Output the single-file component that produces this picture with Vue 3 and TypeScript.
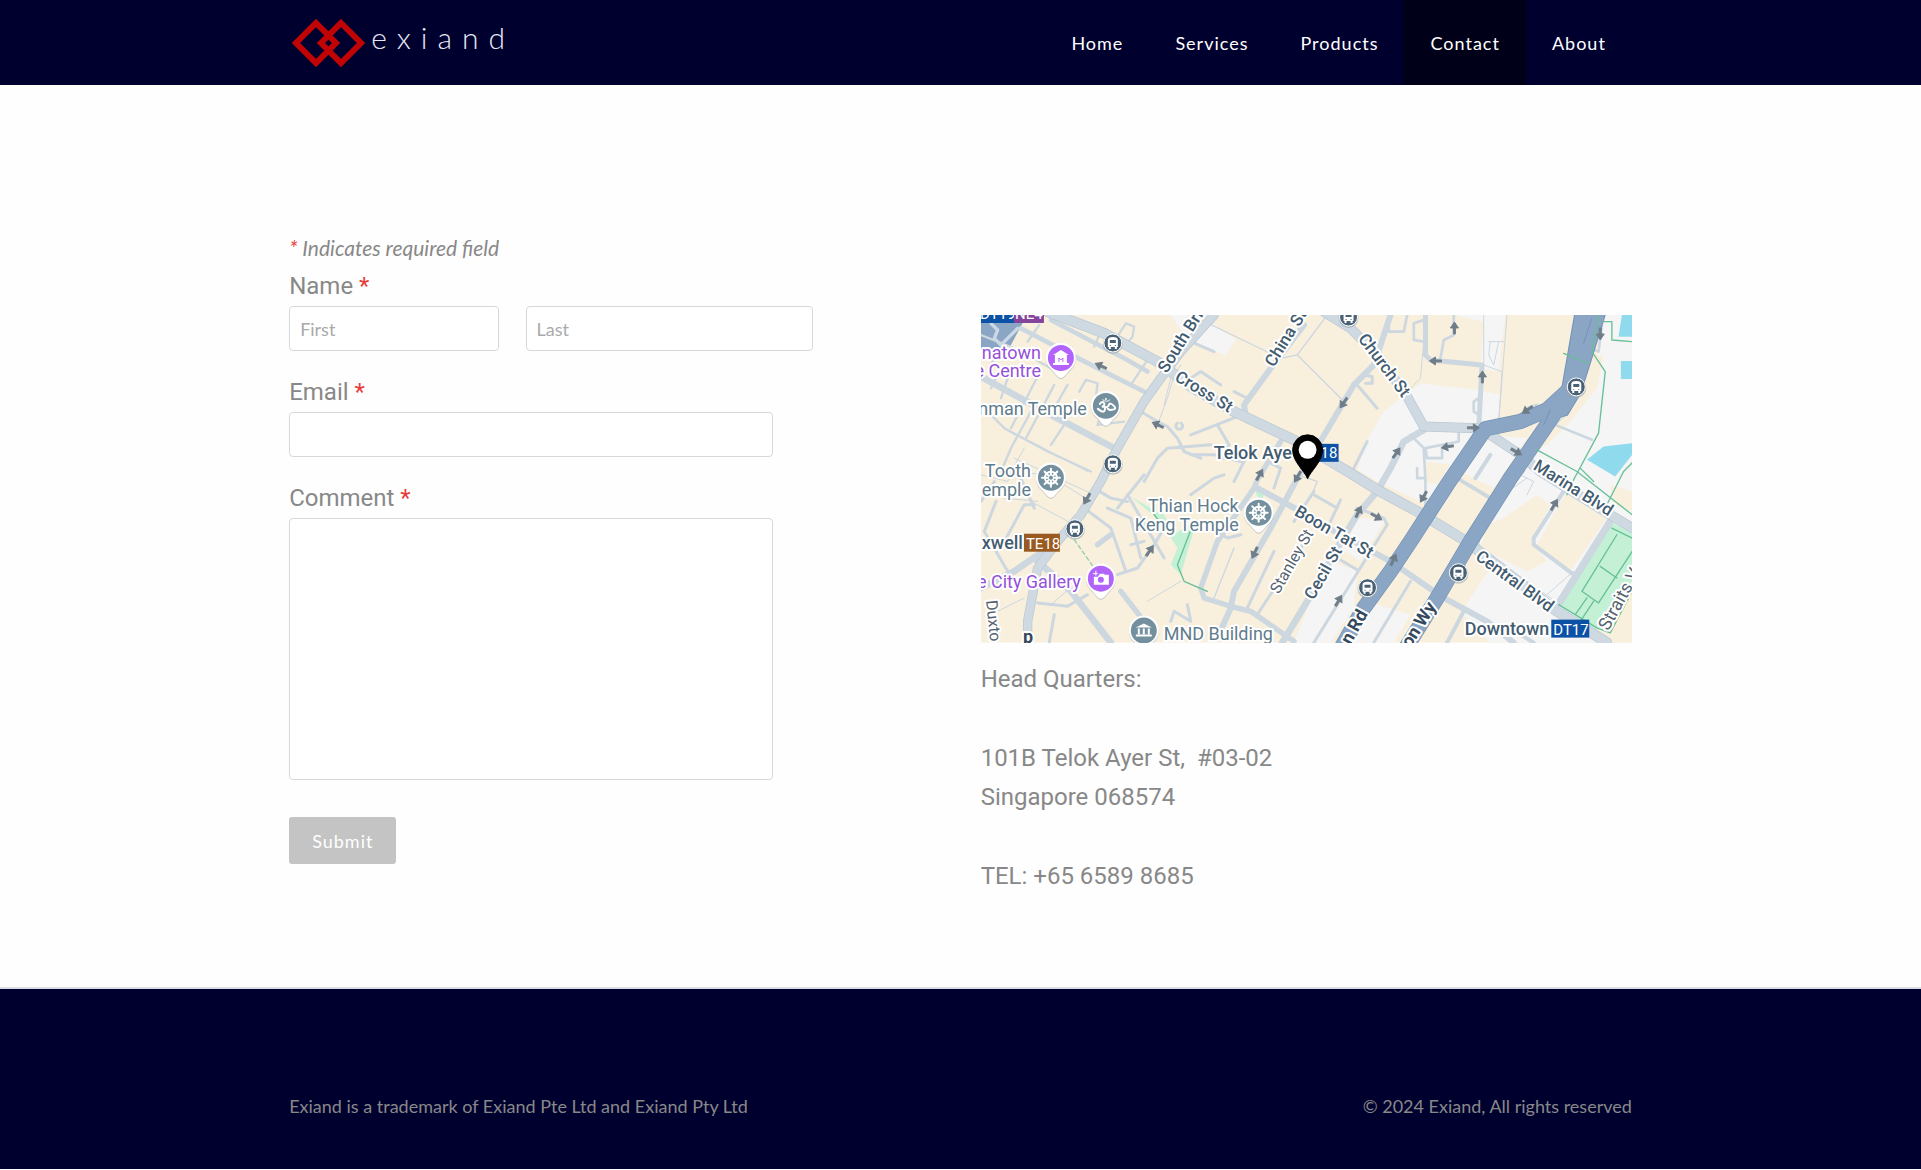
<script setup lang="ts">
import { ref } from 'vue'

interface NavItem { label: string; active?: boolean }
interface Road { d: string; w: number }
interface Label { t: string; x: number; y: number; r?: number; k?: string; end?: boolean }

const nav: NavItem[] = [
  { label: 'Home' },
  { label: 'Services' },
  { label: 'Products' },
  { label: 'Contact', active: true },
  { label: 'About' },
]

const first = ref('')
const last = ref('')
const email = ref('')
const comment = ref('')

// Ground shapes and roads use a grid three times finer than the labels.
const pale: string[] = [
  'M640 30L690 20L765 75L735 122L650 90Z',
  'M570 0H630L660 50L610 60Z',
  'M1210 290L1320 205L1400 215L1500 225L1560 240L1550 330L1490 345L1390 520L1340 570L1190 500L1130 465L1160 375Z',
  'M1420 0H1575L1555 170L1500 160L1510 20Z',
  'M1860 0H1956V984H1530L1450 900L1380 860L1480 690L1600 480L1700 340L1850 150Z',
  'M1510 360L1640 370L1540 520L1440 470Z',
  'M1030 730L1130 770L1120 880L1050 984H940L1000 830Z',
  'M1130 610L1215 615L1140 740L1080 700Z',
  'M1160 860L1290 900L1240 984H1100Z',
]
const sand: string[] = [
  'M1835 130L1870 120L1850 220L1770 320L1700 390L1620 430L1650 350L1740 300Z',
  'M1760 530L1880 610L1770 770L1670 690Z',
  'M1570 610L1670 540L1710 570L1650 680L1700 740L1640 770L1500 700L1520 630Z',
  'M1500 700L1470 680L1350 850L1430 910L1530 760Z',
  'M1890 510L1956 530V590L1900 570Z',
  'M1340 440L1410 450L1370 510L1330 500Z',
  'M1850 950L1956 830V984H1870Z',
]
const roads: Road[] = [
  { w: 14, d: 'M120 40L370 170L500 235M210 15L430 130L500 170' },
  { w: 20, d: 'M0 185L220 305L400 400M0 820L100 770L230 680M160 730L270 830L390 984' },
  { w: 7, d: 'M175 30L140 80M355 60L340 95M400 80L435 25L460 35L455 65L430 95M295 230L315 195L350 205L345 250M500 135L450 210M170 185L90 340M220 210L135 370M0 270L70 340L200 410L330 470M260 210L220 280M250 330L210 390M0 60L100 100L220 165M0 110L60 160L30 220M90 160L60 250M380 250L350 330L430 320M150 290L90 400L60 470' },
  { w: 3, d: 'M130 400L90 470L200 480L330 560M100 430L340 540M600 150L580 180L560 250L530 330M570 190L550 270M0 480L80 500L100 460M150 380L320 470' },
  { w: 9, d: 'M480 290L530 320L560 335L590 370L610 410L660 430M690 390L560 400L530 430L490 500M590 325A10 10 0 1 0 601 325M45 560L10 650L80 770M160 570L130 570L70 680M110 470L160 580M310 580L390 640L435 770M380 580L450 610L480 730M440 540L550 730M410 780L470 760L520 690L550 640M490 480L410 580M170 865L260 875L320 840M220 900L205 984M570 920L580 890L630 920L620 870M0 560L40 500M340 520L390 550L440 560M450 690L490 680' },
  { w: 3, d: 'M150 560L280 630M70 550L170 560M30 900L130 850M280 810L210 870M500 860L600 800' },
  { w: 16, d: 'M350 690L390 660M420 830L490 920' },
  { w: 18, d: 'M970 30L870 160L790 270L795 300M1230 0L1180 150L1120 210L1025 370L945 500L870 640L760 830L750 880L710 970' },
  { w: 16, d: 'M900 380L830 495L820 520L710 680L660 820L670 850L750 875L810 890L940 980' },
  { w: 18, d: 'M830 520L960 590L1080 660L1230 740L1390 850L1520 920L1600 984' },
  { w: 20, d: 'M1330 345L1270 380L1230 460L1190 530L1130 600L1070 700L980 860L905 984' },
  { w: 9, d: 'M1130 210L1190 280M1150 180L1175 185L1175 205L1155 205M760 230L800 250M630 360L770 305M710 330L745 390L730 430M630 420L700 420L780 440M630 80L700 110M630 190L660 170L720 210M1000 530L940 620M1000 540L1070 580M1080 555L1050 620M880 710L800 880M980 670L830 900M1220 630L1000 984M1130 580L1210 610L1220 630M1070 730L1130 765M1290 800L1180 984M630 540L700 490L730 480M690 640L740 670L780 660M810 400L760 500M860 440L900 460L880 520M1160 380L1120 460' },
  { w: 4, d: 'M1040 0L950 120L1090 260M950 120L900 130L630 0M760 700L700 850M950 480L1010 500L990 550M840 570L820 600' },
  { w: 15, d: 'M1335 0L1335 120L1350 135L1505 150L1495 340' },
  { w: 8, d: 'M1420 0V60L1390 75L1380 130M1300 25V75L1330 80M1300 25L1330 15M1225 10L1225 50L1270 50L1280 0M1435 350V380L1335 400L1340 430H1385V400M1290 360L1330 400L1335 500V590M1310 460V490L1335 490M1495 250L1480 260V290L1495 300M1725 330L1835 375M1865 30L1855 110L1830 100M1620 300L1640 280L1670 270M1590 490L1630 470' },
  { w: 3, d: 'M1510 0V150L1565 170L1555 320M1580 0L1555 320M1525 80H1570M1530 80L1525 120L1540 150L1555 80M1330 80L1320 190L1280 230M1770 290L1725 330M1510 340L1560 320M1620 480L1660 500L1640 540M1500 700L1490 640L1540 560L1640 490M1510 710L1740 870M1700 840L1780 770' },
  { w: 12, d: 'M1530 420L1485 490M1750 530L1660 670V690L1780 780M1430 490L1530 550M1590 940L1660 984M1450 890L1400 984' },
  { w: 22, d: 'M1890 620L1740 860' },
]
const majors: Road[] = [
  { w: 28, d: 'M200 -10L370 55L530 140L630 215L760 290L950 380L1110 475L1190 525L1310 590L1450 675L1510 720L1730 890L1880 984' },
  { w: 24, d: 'M700 0L600 110L540 190L490 260L410 400L360 500L300 600L230 680L170 760L140 920V984' },
  { w: 26, d: 'M1030 -10L1110 40L1190 120L1280 245L1330 335L1490 340M1530 360L1620 420L1680 470L1890 600L1956 640' },
]
const highways: Road[] = [
  { w: 46, d: 'M1770 220L1700 285L1620 320L1515 342L1400 510L1290 680L1230 770L1150 880L1085 994' },
  { w: 46, d: 'M1780 210L1690 345L1590 490L1470 680L1370 850L1280 994' },
]
const trunk = 'M1785 -5H1875L1827 150L1800 235L1760 300L1690 320L1715 270L1745 225Z'
const green: string[] = [
  'M1750 115L1825 145M1855 0L1835 110L1875 170L1855 355L1780 495L1760 540M1670 405L1790 470L1956 600M1870 20H1895V75L1956 80M1960 440L1930 470L1880 570M1800 460L1840 500',
  'M1895 640L1956 670M1910 660L1805 830L1855 865L1956 710M1860 755L1910 790M1735 870L1850 940L1890 955L1956 830M1820 850L1785 900M1840 860L1800 920',
  'M640 620L590 750L610 800L680 830M520 600L560 650',
]
// Position and heading of the one-way arrows, in label units.
const arrows = [
  [120, 51, 205], [177, 110, 205], [363, 88, 125], [416, 138, -55], [474, 13, -90], [455, 46, 180],
  [502, 62, -90], [493, 113, 0], [467, 132, 170], [547, 95, 145], [536, 137, 30], [620, 19, 90],
  [106, 184, 120], [169, 236, -55], [274, 238, 115], [378, 197, -65], [396, 202, 30], [413, 245, -65],
  [358, 286, -60], [443, 182, 120], [574, 190, -60], [279, 160, -60], [317, 162, 120],
]
const stops = [[132, 28], [132, 149], [368, 2], [596, 72], [94, 214], [387, 273], [478, 258]]
const pins = [
  { x: 80, y: 43, kind: 'museum' },
  { x: 125, y: 91, kind: 'om' },
  { x: 70, y: 163, kind: 'wheel' },
  { x: 278, y: 198, kind: 'wheel' },
  { x: 120, y: 264, kind: 'camera' },
  { x: 163, y: 316, kind: 'bank' },
]
const labels: Label[] = [
  { t: 'natown', x: 60, y: 44, k: 'violet', end: true },
  { t: 'e Centre', x: 60, y: 62, k: 'violet', end: true },
  { t: 'nman Temple', x: 106, y: 100, end: true },
  { t: 'Tooth', x: 50, y: 162, end: true },
  { t: 'emple', x: 50, y: 181, end: true },
  { t: 'xwell', x: 42, y: 234, k: 'strong', end: true },
  { t: 'e City Gallery', x: 100, y: 273, k: 'violet', end: true },
  { t: 'Thian Hock', x: 258, y: 197, end: true },
  { t: 'Keng Temple', x: 258, y: 216, end: true },
  { t: 'MND Building', x: 183, y: 325 },
  { t: 'Telok Aye', x: 233, y: 144, k: 'strong' },
  { t: 'Downtown', x: 569, y: 320, k: 'strong', end: true },
  { t: 'South Bri', x: 186, y: 59, r: -58, k: 'street' },
  { t: 'Cross St', x: 193, y: 65, r: 31, k: 'street' },
  { t: 'China St', x: 293, y: 53, r: -58, k: 'street' },
  { t: 'Church St', x: 377, y: 24, r: 53, k: 'street' },
  { t: 'Boon Tat St', x: 313, y: 200, r: 30, k: 'street' },
  { t: 'Stanley St', x: 298, y: 280, r: -60, k: 'lane' },
  { t: 'Cecil St', x: 333, y: 286, r: -60, k: 'street' },
  { t: 'Marina Blvd', x: 552, y: 154, r: 32, k: 'street' },
  { t: 'Central Blvd', x: 494, y: 244, r: 36, k: 'street' },
  { t: 'Straits V', x: 628, y: 317, r: -61, k: 'quay' },
  { t: 'n Rd', x: 370, y: 331, r: -61, k: 'bold' },
  { t: 'on Wy', x: 430, y: 334, r: -58, k: 'bold' },
  { t: 'Duxto', x: 5, y: 286, r: 84, k: 'lane' },
  { t: 'p', x: 42, y: 328, k: 'bold' },
]
const spokes = [0, 45, 90, 135]
</script>

<template>
  <div class="page">
    <header class="top">
      <div class="wrap bar">
        <a class="logo" href="#" aria-label="exiand">
          <svg width="76" height="52" viewBox="0 0 76 52" fill="none" stroke="#c00404" stroke-width="6" aria-hidden="true">
            <path d="M27 6L47 26L27 46L7 26Z" />
            <path d="M52 6L72 26L52 46L32 26Z" />
          </svg>
          <span class="word">exiand</span>
        </a>
        <nav class="menu">
          <a v-for="item in nav" :key="item.label" href="#" :class="{ active: item.active }">{{ item.label }}</a>
        </nav>
      </div>
    </header>

    <main class="wrap content">
      <form class="form" @submit.prevent>
        <p class="hint"><span class="req">*</span> Indicates required field</p>
        <div class="field">
          <label for="first">Name <span class="req">*</span></label>
          <div class="names">
            <input id="first" v-model="first" class="first" type="text" placeholder="First">
            <input id="last" v-model="last" class="last" type="text" placeholder="Last" aria-label="Last name">
          </div>
        </div>
        <div class="field">
          <label for="email">Email <span class="req">*</span></label>
          <input id="email" v-model="email" class="wide" type="email">
        </div>
        <div class="field">
          <label for="comment">Comment <span class="req">*</span></label>
          <textarea id="comment" v-model="comment" class="wide"></textarea>
        </div>
        <button type="submit">Submit</button>
      </form>

      <section class="office">
        <svg class="map" viewBox="0 0 652 328" role="img" aria-label="Map of Telok Ayer">
          <rect width="652" height="328" fill="#f8efdd" />
          <g transform="scale(.33333)" fill="none" stroke-linejoin="round" stroke-linecap="round">
            <path v-for="d in pale" :key="d" :d="d" fill="#f5f5f5" />
            <path v-for="d in sand" :key="d" :d="d" fill="#f8efdd" />
            <path d="M1890 620L1956 655V800L1850 950L1740 870Z" fill="#c4f1d6" />
            <path d="M450 545L510 580L550 600L580 660L650 610L600 780L570 750L590 700L540 620Z" fill="#c4f1d6" />
            <path d="M820 520L850 540L840 570Z" fill="#c4f1d6" />
            <path d="M1925 0H1956V65H1915ZM1922 138H1956V192H1922ZM1820 435L1870 395L1956 385V420L1905 485Z" fill="#90daed" />
            <path d="M0 15H130L90 90L30 130L0 110Z" fill="#8ba5c4" />
            <path d="M30 25L50 45L40 70L60 90L110 40" stroke="#cbd9e6" stroke-width="10" />
            <path v-for="r in roads" :key="r.d" :d="r.d" :stroke-width="r.w" stroke="#ccd7df" />
            <path v-for="r in majors" :key="r.d" :d="r.d" :stroke-width="r.w + 4" stroke="#b9c7d3" />
            <path v-for="r in majors" :key="'m' + r.d" :d="r.d" :stroke-width="r.w" stroke="#cfd9e1" />
            <path :d="trunk" stroke="#7592b5" stroke-width="6" />
            <path v-for="r in highways" :key="r.d" :d="r.d" :stroke-width="r.w" stroke="#7592b5" />
            <path v-for="r in highways" :key="'h' + r.d" :d="r.d" :stroke-width="r.w - 4" stroke="#8ba5c4" />
            <path :d="trunk" fill="#8ba5c4" />
            <path d="M1835 10L1810 85M1710 285L1690 330" stroke="#7592b5" stroke-width="3" />
            <path v-for="d in green" :key="d" :d="d" stroke="#67c097" stroke-width="4" />
            <path d="M280 675L340 760" stroke="#8fcfae" stroke-width="4" stroke-dasharray="12 9" />
          </g>
          <path v-for="(a, i) in arrows" :key="i" d="M-6 -1H0V-4L6 0L0 4V1H-6Z" fill="#6f7d89" stroke="#6f7d89"
            stroke-width="1" :transform="`translate(${a[0]} ${a[1]}) rotate(${a[2]})`" />

          <g class="labels">
            <text v-for="l in labels" :key="l.t" :class="l.k" :text-anchor="l.end ? 'end' : 'start'"
              :transform="`translate(${l.x} ${l.y}) rotate(${l.r ?? 0})`">{{ l.t }}</text>
          </g>

          <g class="tags">
            <rect x="-6" y="-10" width="39" height="18" fill="#0b52a6" /><text x="-1" y="4">DT19</text>
            <rect x="33" y="-10" width="30" height="18" fill="#85449b" /><text x="34" y="4">NE4</text>
            <rect x="43" y="219" width="36" height="18" fill="#9a5b20" /><text x="45" y="234">TE18</text>
            <rect x="320" y="129" width="38" height="18" fill="#0b52a6" /><text x="340" y="143">18</text>
            <rect x="571" y="305" width="38" height="18" fill="#0b52a6" /><text x="573" y="320">DT17</text>
          </g>

          <g v-for="(s, i) in stops" :key="'s' + i" :transform="`translate(${s[0]} ${s[1]})`">
            <circle r="10" cy="1" fill="#9aa5ae" opacity=".6" />
            <circle r="9" fill="#4a6175" stroke="#fff" stroke-width="1" />
            <path d="M-5 4V-3Q-5 -6 0 -6T5 -3V4H4V6H2V4H-2V6H-4V4Z" fill="#fff" />
            <path d="M-3 -3H3V0H-3ZM-3 2H-2V3H-3ZM2 2H3V3H2Z" fill="#4a6175" />
          </g>

          <g v-for="(p, i) in pins" :key="'p' + i" :transform="`translate(${p.x} ${p.y})`" fill="none" stroke="#fff">
            <path d="M0 21C-3 21 -6 16 -10 12A15 15 0 1 1 10 12C6 16 3 21 0 21Z" fill="#a9a9a9" stroke="none" opacity=".6" />
            <path d="M0 20C-3 20 -6 15 -10 11A15 15 0 1 1 10 11C6 15 3 20 0 20Z" fill="#fff" stroke="none" />
            <circle r="13" stroke="none" :fill="p.kind === 'museum' || p.kind === 'camera' ? '#b163fb' : '#74909f'" />
            <g v-if="p.kind === 'museum'">
              <path d="M-8 -3L0 -8L8 -3ZM-6 -3H6V5H-6ZM-8 5H8V7H-8Z" fill="#fff" stroke="none" />
              <path d="M-2 4V0L0 2L2 0V4" stroke="#b163fb" stroke-width="1" />
            </g>
            <g v-else-if="p.kind === 'camera'">
              <path d="M-7 -2H-3L-1 -5H3L4 -4H8V6H-7Z" fill="#fff" stroke="none" />
              <circle cy="1" r="3" fill="#b163fb" stroke="none" />
              <path d="M-5 -8V-3M-8 -5H-3" stroke-width="1" />
            </g>
            <g v-else-if="p.kind === 'bank'">
              <path d="M-8 -3L0 -7L8 -3ZM-8 4H8V6H-8Z" fill="#fff" stroke="none" />
              <path d="M-5 -2V4M0 -2V4M5 -2V4" stroke-width="2" />
            </g>
            <g v-else-if="p.kind === 'wheel'">
              <circle r="6" stroke-width="2" />
              <path v-for="a in spokes" :key="a" d="M-9 0H9" stroke-width="2" stroke-linecap="round" :transform="`rotate(${a})`" />
              <circle r="2" fill="#74909f" stroke="none" />
            </g>
            <g v-else stroke-width="2" stroke-linecap="round">
              <path d="M-6 -2Q-4 -5 -2 -3T-4 1Q0 0 -1 4T-8 3M-1 1Q2 2 3 -1T8 0T4 4L2 3" />
              <path d="M-3 -6Q1 -3 4 -6" stroke-width="1" />
              <circle cy="-7" r="1" fill="#fff" stroke="none" />
            </g>
          </g>

          <path d="M327 164C324 156 312 147 312 135A15 15 0 0 1 342 135C342 147 330 156 327 164Z" fill="#000" stroke="#000" stroke-width="1" />
          <circle cx="327" cy="135" r="9" fill="#fff" />
        </svg>
        <address>
          <p>Head Quarters:</p>
          <p>101B Telok Ayer St,&nbsp; #03-02<br>Singapore 068574</p>
          <p>TEL: +65 6589 8685</p>
        </address>
      </section>
    </main>

    <footer class="bottom">
      <div class="wrap notes">
        <span>Exiand is a trademark of Exiand Pte Ltd and Exiand Pty Ltd</span>
        <span>© 2024 Exiand, All rights reserved</span>
      </div>
    </footer>
  </div>
</template>

<style>
body { background: #fefefe; }
</style>

<style scoped>
* { box-sizing: border-box; }
p { margin: 0; }
.page { font-family: Lato, sans-serif; font-size: 18px; color: #888; }
.wrap { width: calc(70% - 2px); margin: 0 auto; }

.top { background: #00002f; }
.bar { display: flex; justify-content: space-between; height: 85px; }
.logo { display: flex; align-items: center; color: #e8e8f4; text-decoration: none; }
.word { font-size: 30px; font-weight: 300; line-height: 36px; letter-spacing: 10px; margin-bottom: 12px; padding-left: 6px; }
.menu { display: flex; }
.menu a { padding: 0 26px; color: #fff; text-decoration: none; letter-spacing: 1px; line-height: 86px; }
.menu a.active { background: #000018; }

.content { display: flex; justify-content: space-between; align-items: flex-start; padding: 143px 0 91px; }
.form { width: 39%; }
.hint { font-size: 21px; font-style: italic; line-height: 39px; }
.req { color: #e93a3a; }
.field { display: flex; flex-direction: column; margin-bottom: 22px; }
label { font: 24px/39px Roboto, sans-serif; }
.names { display: flex; gap: 27px; }
input, textarea {
  display: block; min-width: 0; height: 45px; padding: 0 10px; border: 1px solid #d6d9db; border-radius: 4px;
  background: #fff; color: #666; font: 18px Lato, sans-serif;
}
input::placeholder { color: #aaa; opacity: 1; }
.names .first { width: 40%; }
.names .last { flex: 1; }
.wide { width: calc(100% - 40px); }
textarea { height: 262px; padding: 10px; resize: none; }
button {
  height: 47px; margin-top: 15px; padding: 0 23px; border: 0; border-radius: 3px; background: #c4c4c4; color: #fff;
  font: 18px Lato, sans-serif; letter-spacing: 1px;
}

.office { width: 48.5%; padding-top: 87px; }
.map { display: block; width: 100%; }
address { display: flex; flex-direction: column; gap: 40px; margin-top: 17px; font: 24px/39px Roboto, sans-serif; }

.labels text {
  font: 18px Roboto, sans-serif; fill: #5f7c8c; stroke: #fff; stroke-width: 4px; stroke-linejoin: round; paint-order: stroke;
}
.labels .violet { fill: #9550dc; }
.labels .strong { font-weight: 500; fill: #435c70; }
.labels .street { font-weight: 500; font-size: 17px; fill: #435c70; }
.labels .lane { font-size: 16px; fill: #55626e; }
.labels .quay { fill: #55626e; }
.labels .bold { font-weight: 700; fill: #34495e; }
.tags text { font: 15px Roboto, sans-serif; fill: #fff; }

.bottom { padding: 105px 0 50px; border-top: 2px solid #dcdce4; background: #00002f; }
.notes { display: flex; justify-content: space-between; line-height: 25px; }
</style>
